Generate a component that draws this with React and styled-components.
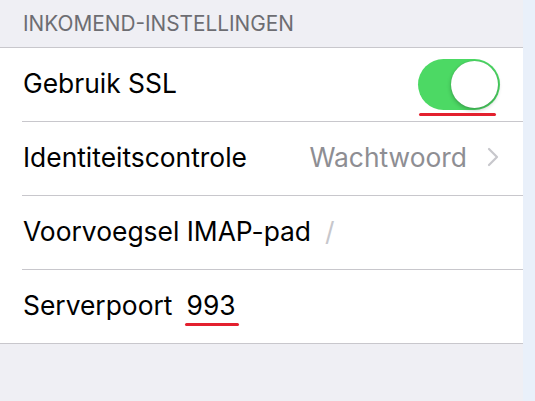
import React from "react";
import styled, { createGlobalStyle } from "styled-components";

const GlobalStyle = createGlobalStyle`
  body {
    margin: 0;
    background: #e9f0fa;
    font-family: Inter, "Liberation Sans", Arial, sans-serif;
    -webkit-font-smoothing: antialiased;
  }
`;

const Page = styled.div`
  width: 523px;
  height: 401px;
  background: #efeff4;
`;

const SectionHeader = styled.div`
  height: 48px;
  box-sizing: border-box;
  padding: 11px 0 0 23px;
  font-size: 20.8px;
  color: #6d6d72;
  border-bottom: 1px solid #c8c7cc;
`;

const Group = styled.div`
  background: #ffffff;
  border-bottom: 1px solid #c8c7cc;
`;

const Row = styled.div`
  position: relative;
  display: flex;
  align-items: center;
  height: 73px;
  box-sizing: border-box;
  padding: 0 24px 3px 23px;
  font-size: 26.4px;
  color: #000000;

  & + & {
    border-top: 1px solid transparent;
    height: 74px;
  }
  & + &::before {
    content: "";
    position: absolute;
    top: -1px;
    left: 22px;
    right: 0;
    height: 1px;
    background: #c8c7cc;
  }
`;

const Label = styled.span`
  flex: 0 0 auto;
`;

const Value = styled.span`
  margin-left: ${({ $right }) => ($right ? "auto" : "14px")};
  color: ${({ $muted }) => ($muted ? "#8e8e93" : "#000000")};
  ${({ $faint }) => $faint && "color: #c7c7cc;"}
  position: relative;
`;

const Marked = styled.span`
  position: relative;
  &::after {
    content: "";
    position: absolute;
    left: -2px;
    right: -3px;
    bottom: -5px;
    height: 3px;
    border-radius: 2px;
    background: #e3202e;
  }
`;

const Chevron = styled.svg`
  margin-left: 20px;
  flex: 0 0 auto;
`;

const Switch = styled.div`
  position: relative;
  margin-left: auto;
  margin-right: -1px;
  margin-top: 2px;
  width: 82px;
  height: 51px;
  border-radius: 26px;
  background: #4cd964;

  &::before {
    content: "";
    position: absolute;
    top: 2px;
    right: 2px;
    width: 47px;
    height: 47px;
    border-radius: 50%;
    background: #ffffff;
    box-shadow: 0 2px 4px rgba(0, 0, 0, 0.25), 0 0 1px rgba(0, 0, 0, 0.2);
  }
  &::after {
    content: "";
    position: absolute;
    left: 1px;
    right: 4px;
    bottom: -6px;
    height: 3px;
    border-radius: 2px;
    background: #e3202e;
  }
`;

export default function App() {
  return (
    <>
      <GlobalStyle />
      <Page>
        <SectionHeader>INKOMEND-INSTELLINGEN</SectionHeader>
        <Group>
          <Row>
            <Label>Gebruik SSL</Label>
            <Switch />
          </Row>
          <Row>
            <Label>Identiteitscontrole</Label>
            <Value $right $muted>Wachtwoord</Value>
            <Chevron width="12" height="20" viewBox="0 0 12 20">
              <path d="M2 2l8 8-8 8" fill="none" stroke="#c7c7cc" strokeWidth="2.2" strokeLinecap="round" strokeLinejoin="round" />
            </Chevron>
          </Row>
          <Row>
            <Label>Voorvoegsel IMAP-pad</Label>
            <Value $faint>/</Value>
          </Row>
          <Row>
            <Label>Serverpoort</Label>
            <Value>
              <Marked>993</Marked>
            </Value>
          </Row>
        </Group>
      </Page>
    </>
  );
}
